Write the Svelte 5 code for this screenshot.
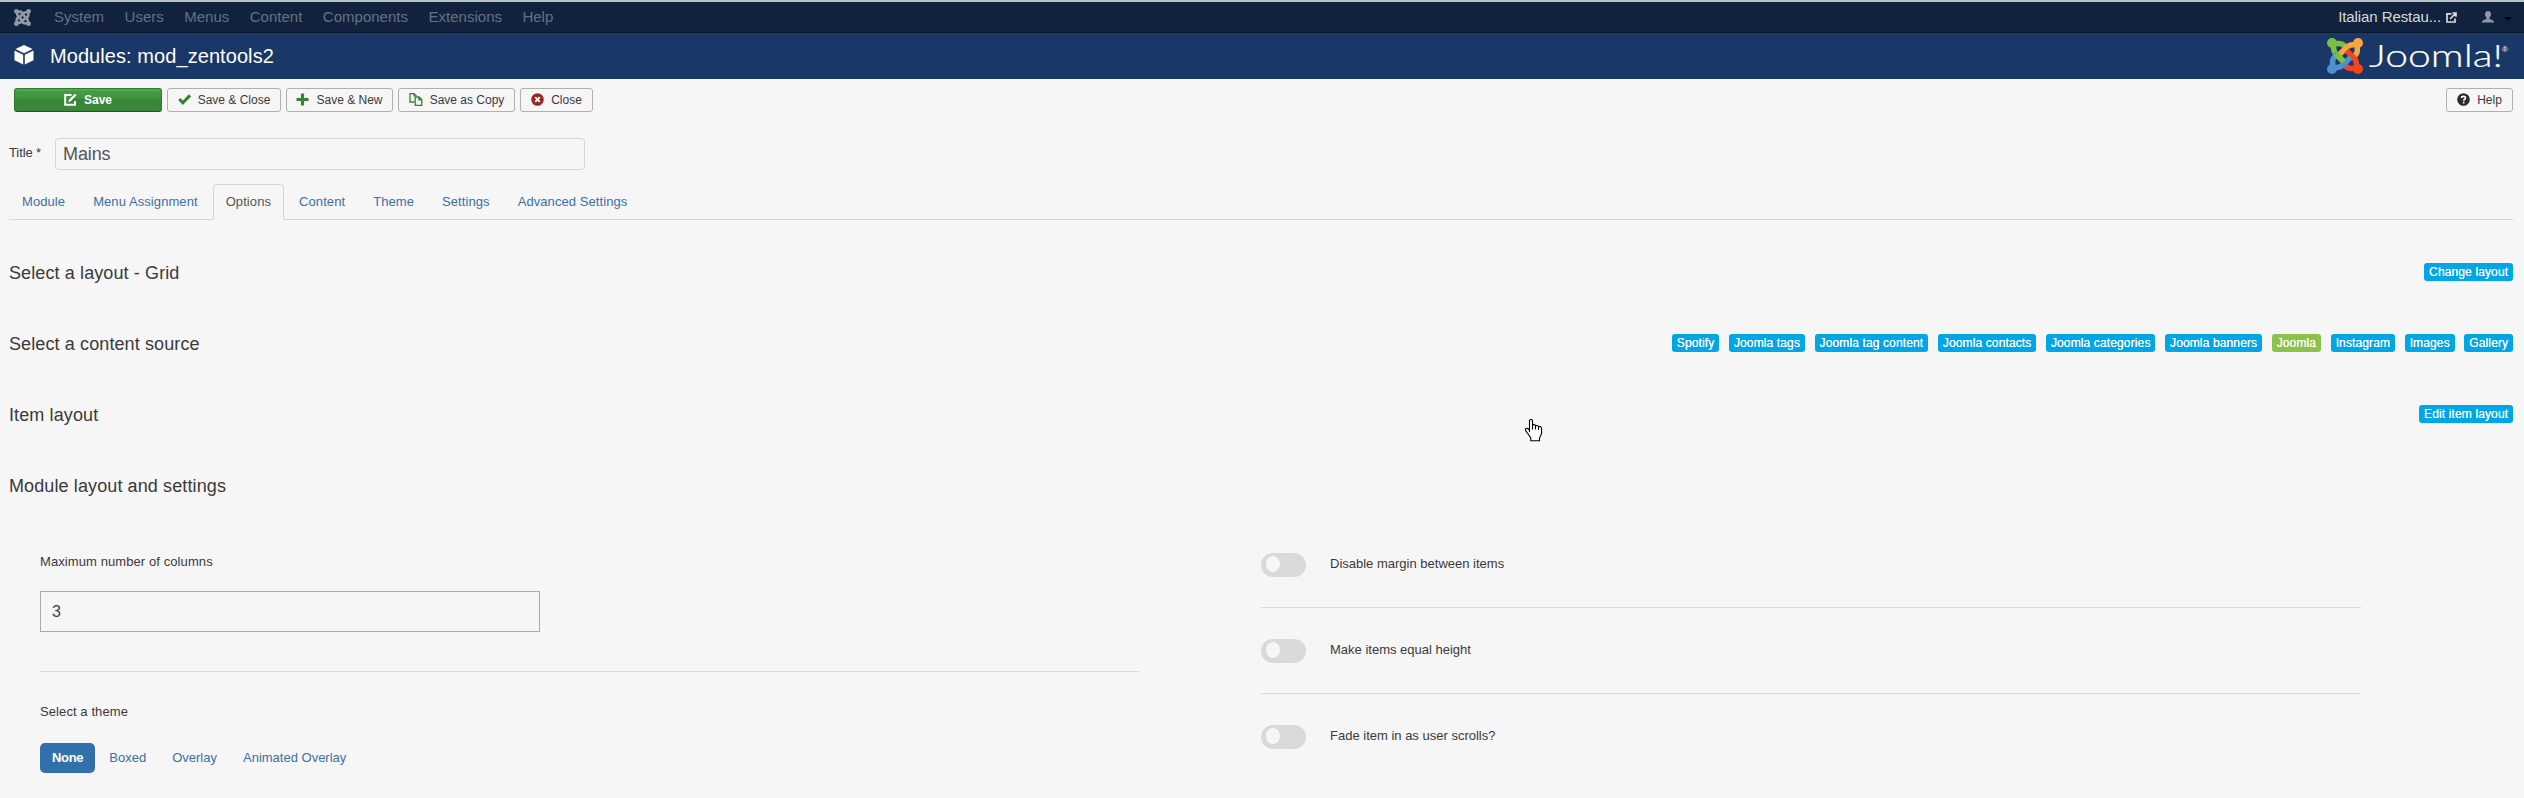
<script>
  const menu = ['System', 'Users', 'Menus', 'Content', 'Components', 'Extensions', 'Help'];
  const tabs = ['Module', 'Menu Assignment', 'Options', 'Content', 'Theme', 'Settings', 'Advanced Settings'];
  const sources = ['Spotify', 'Joomla tags', 'Joomla tag content', 'Joomla contacts', 'Joomla categories', 'Joomla banners', 'Joomla', 'Instagram', 'Images', 'Gallery'];
  const rows = [
    { title: 'Select a layout - Grid', badges: ['Change layout'] },
    { title: 'Select a content source', badges: sources },
    { title: 'Item layout', badges: ['Edit item layout'] },
    { title: 'Module layout and settings', badges: [] }
  ];
  const themes = ['None', 'Boxed', 'Overlay', 'Animated Overlay'];
  const switches = ['Disable margin between items', 'Make items equal height', 'Fade item in as user scrolls?'];
  const logoColors = ['#7ac143', '#f9a541', '#f44321', '#5091cd'];
</script>

{#snippet mark(colors, size)}
  <svg width={size} height={size} viewBox="0 0 36 36">
    {#each colors as c, i}
      <g transform={`rotate(${i * 90} 18 18)`} fill="none" stroke={c} stroke-width="5.600">
        <path d="M6.500 5.500Q6 13 9 16L16.500 23.500" />
        <path d="M5.500 6.500C11 5 15 5.500 17 7.500L20 10.500" />
        <circle cx="5" cy="5" r="5" fill={c} stroke="none" />
      </g>
    {/each}
    <path d="M9 16L16.500 23.500" stroke={colors[0]} stroke-width="5.600" />
  </svg>
{/snippet}

<div class="page">
  <nav class="top">
    <span class="brand">{@render mark(['#9099a6', '#9099a6', '#9099a6', '#9099a6'], 17)}</span>
    <div class="menu">{#each menu as m}<span>{m}</span>{/each}</div>
    <div class="site">
      <span>Italian Restau...</span>
      <svg width="11" height="11" viewBox="0 0 11 11" fill="none" stroke="#d9d9d9" stroke-width="1.700">
        <path d="M5.500 1.800H1V10h8V6.500M4 7l5.600-5.600M6.400 1H10v3.700" />
      </svg>
    </div>
    <svg class="user" width="12" height="12" viewBox="0 0 12 12" fill="#8e97a4">
      <path d="M6 0c2 0 3 1.300 3 3.200S8 6.300 7.400 6.900v1C9 8.700 12 9 12 11v.6H0V11c0-2 3-2.300 4.600-3.100v-1C4 6.300 3 5.100 3 3.200S4 0 6 0z" />
    </svg>
    <i class="caret"></i>
  </nav>

  <header>
    <svg width="20" height="20" viewBox="0 0 20 20" fill="#fff">
      <path d="M10 0l8.600 4L10 8.300 1.400 4z" />
      <path d="M.5 5.500L9.200 9.700V19.500L.5 15.200z" />
      <path d="M19.500 5.500L10.800 9.700V19.500L19.500 15.200z" />
    </svg>
    <h1>Modules: mod_zentools2</h1>
    <div class="logo">
      {@render mark(logoColors, 36)}
      <svg class="word" width="144" height="36" viewBox="0 0 144 36" fill="#fff">
        <text x="6" y="28.500" font-size="31" textLength="134" lengthAdjust="spacingAndGlyphs">Joomla!</text>
        <text class="reg" x="139" y="13.500" font-size="8">®</text>
      </svg>
    </div>
  </header>

  <div class="toolbar">
    <button class="save">
      <svg width="13" height="13" viewBox="0 0 13 13" fill="none" stroke="#fff" stroke-width="2">
        <path d="M7.500 2H1.200v9.800H11V8" /><path d="M4.300 9l.5-2.300L11 .8l1.500 1.500-6 6.200z" fill="#fff" stroke="none" />
      </svg>Save
    </button>
    <button class="close2">
      <svg width="13" height="13" viewBox="0 0 13 13" fill="none" stroke="#378137" stroke-width="3"><path d="M1.300 6l3.500 3.800L12 2.400" /></svg>Save &amp; Close
    </button>
    <button class="new">
      <svg width="13" height="13" viewBox="0 0 13 13" fill="none" stroke="#378137" stroke-width="3.200"><path d="M6.500 .5v12M.5 6.500h12" /></svg>Save &amp; New
    </button>
    <button class="copy">
      <svg width="14" height="13" viewBox="0 0 14 13" fill="none" stroke="#378137" stroke-width="1.300">
        <path d="M5.500 9H1V.7h4L7.500 3M5 .7v2.800" /><path d="M6.200 4h3.800l2.800 2.600v5.700H6.200zM9.800 4v2.800h3" />
      </svg>Save as Copy
    </button>
    <button class="close">
      <svg width="13" height="13" viewBox="0 0 13 13"><circle cx="6.500" cy="6.500" r="6.300" fill="#942a25" /><path d="M4.200 4.200l4.600 4.600M8.800 4.200L4.200 8.800" stroke="#fff" stroke-width="1.900" /></svg>Close
    </button>
    <button class="help">
      <svg width="13" height="13" viewBox="0 0 13 13"><circle cx="6.500" cy="6.500" r="6.300" fill="#2b2b2b" /><path d="M4.500 5c0-2.200 4-2.200 4 0 0 1.300-1.800 1.200-1.800 2.700M6.700 8.700v1.700" fill="none" stroke="#fff" stroke-width="1.600" /></svg>Help
    </button>
  </div>

  <div class="title">
    <label for="title">Title *</label>
    <input id="title" value="Mains" />
  </div>

  <div class="tabs">{#each tabs as t}<span class:active={t === 'Options'}>{t}</span>{/each}</div>

  <div class="rows">
    {#each rows as r}
      <section>
        <h2>{r.title}</h2>
        <div class="badges">{#each r.badges as b}<span class:on={b === 'Joomla'}>{b}</span>{/each}</div>
      </section>
    {/each}
  </div>

  <div class="settings">
    <div class="left">
      <label for="cols">Maximum number of columns</label>
      <input id="cols" value="3" />
      <hr />
      <p>Select a theme</p>
      <div class="pills">{#each themes as t, i}<span class:active={i === 0}>{t}</span>{/each}</div>
    </div>
    <div class="right">
      {#each switches as s}
        <div class="switch"><i><b></b></i><span>{s}</span></div>
      {/each}
    </div>
  </div>

  <svg class="cursor" width="18" height="23" viewBox="0 0 18 23" fill="#fff" stroke="#000" stroke-width="1.100">
    <path d="M4.500 13V2C4.500 0 7.500 0 7.500 2V6.500C8 5 10.500 5.500 10.500 7 11.500 6 13.500 6.500 13.500 8 15 7 16.600 8 16.600 9.500V14.500L14.500 19V21.700H5.800V19L2.700 14.500 .6 11.500V9.700C2 8.700 3.500 9.500 4.500 11.500M7.500 6.500V10.500M10.500 7V10.500M13.500 8V11" />
  </svg>
</div>

<style>
  :global(body) { background: #f6f6f6; overflow: hidden; }
  .page { position: relative; height: 798px; overflow: hidden; background: #f6f6f6; color: #3a3a3a; font: 13px/18px "Liberation Sans", Arial, sans-serif; }
  svg { display: block; flex: none; }
  .top { box-sizing: border-box; height: 33px; display: flex; align-items: center; background: #10223e; border-top: 2px solid #b7c0c2; border-bottom: 1px solid #0b182b; padding: 0 12px 0 14px; font-size: 15px; color: #667182; }
  .brand { width: 40px; }
  .menu { display: flex; gap: 20.400px; flex: 1; letter-spacing: .02px; }
  .site { display: flex; align-items: center; gap: 5px; color: #d9d9d9; letter-spacing: -.08px; margin-right: 25px; }
  .user { margin-right: 10px; }
  .caret { border: 4px solid transparent; border-top-color: #000; border-bottom: 0; margin-top: 3px; }
  header { height: 46px; display: flex; align-items: center; background: #1a3867; color: #fff; padding: 0 14px 0 15px; }
  header > svg { margin-top: -3px; margin-left: -1px; }
  h1 { flex: 1; margin: 0 0 0 16px; font-size: 20px; font-weight: 400; letter-spacing: .07px; }
  .logo { display: flex; margin-right: 3px; }
  .word { font-family: Lato, sans-serif; font-weight: 300; overflow: visible; }
  .word text { stroke: #fff; stroke-width: .2px; }
  .word .reg { font-family: "Liberation Sans", sans-serif; stroke: none; }
  .toolbar { display: flex; gap: 5px; padding: 9px 11px 0 14px; }
  button { box-sizing: border-box; height: 24px; display: flex; align-items: center; justify-content: center; gap: 7px; padding: 0 0 1px; border: 1px solid #b0b0b0; border-radius: 3px; background: #f6f6f6; color: #3a3a3a; font: 12px/18px "Liberation Sans", Arial, sans-serif; }
  .save { width: 148px; color: #fff; font-weight: 700; border-color: #327a32 #327a32 #1f5420; background: linear-gradient(#53ad53 0, #439a43 3px, #409740 9px, #398639 10px, #398639); }
  .close2 { width: 114px; }
  .new { width: 107px; }
  .copy { width: 117px; }
  .close { width: 73px; }
  .help { width: 67px; margin-left: auto; }
  .title { display: flex; margin-top: 26px; padding-left: 9px; }
  .title label { width: 46px; padding-top: 6px; letter-spacing: -.1px; }
  input { box-sizing: border-box; margin: 0; background: #f6f6f6; outline: 0; font-family: "Liberation Sans", Arial, sans-serif; }
  .title input { width: 530px; height: 32px; padding: 0 7px; border: 1px solid #d6d6d6; border-radius: 4px; color: #555; font-size: 18px; letter-spacing: -.1px; }
  .tabs { display: flex; gap: 2px; height: 35px; margin: 14px 11px 0 9px; border-bottom: 1px solid #d6d6d6; color: #3b70a8; letter-spacing: .08px; }
  .tabs span { box-sizing: border-box; height: 36px; padding: 8px 12px; border: 1px solid transparent; }
  .tabs .active { color: #555; background: #f6f6f6; border-color: #d6d6d6 #d6d6d6 #f6f6f6; border-radius: 4px 4px 0 0; }
  .rows { padding: 17px 11px 0 9px; }
  section { height: 71px; display: flex; align-items: center; justify-content: space-between; }
  h2 { margin: 0; font-size: 18px; line-height: 24px; font-weight: 400; letter-spacing: .11px; }
  .badges { display: flex; gap: 9.900px; margin-top: -2px; }
  .badges span { height: 18px; padding: 0 4.800px; border-radius: 3px; background: #00a6e6; color: #fff; font-size: 12px; line-height: 18px; letter-spacing: .13px; text-shadow: 0 0 .5px #fff; }
  .badges .on { background: #8bc34a; }
  .settings { display: flex; gap: 122px; padding: 32px 0 0 40px; }
  .left { width: 1099px; }
  .left label, .left p { display: block; margin: 0; letter-spacing: .09px; }
  .left input { display: block; width: 500px; height: 41px; margin-top: 20px; padding: 0 11px; border: 1px solid #aaa; color: #444; font-size: 16px; }
  hr { height: 1px; border: 0; margin: 39px 0 31px; background: #d9d9d9; }
  .pills { display: flex; gap: 2px; margin-top: 22px; color: #3b70a8; }
  .pills span { padding: 6px 12px; border-radius: 5px; }
  .pills .active { background: #3071ac; color: #fff; font-weight: 700; letter-spacing: -.3px; }
  .right { width: 1100px; }
  .switch { box-sizing: border-box; height: 86px; display: flex; align-items: flex-start; gap: 24px; border-bottom: 1px solid #d9d9d9; padding-top: 31px; }
  .switch:first-child { height: 55px; padding-top: 0; }
  .switch:last-child { border: 0; }
  .switch i { box-sizing: border-box; width: 45px; height: 24px; border-radius: 12px; background: #d9d9d9; padding: 3px 5px; }
  .switch b { display: block; width: 14px; height: 16px; border-radius: 50%; background: #f6f6f6; }
  .switch span { padding-top: 2px; }
  .cursor { position: absolute; left: 1525px; top: 419px; }
</style>
